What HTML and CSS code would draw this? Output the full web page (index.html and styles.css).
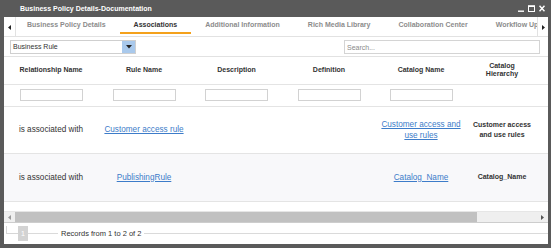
FILE: index.html
```html
<!DOCTYPE html>
<html lang="en">
<head>
<meta charset="UTF-8" />
<title>Business Policy Details-Documentation</title>
<link rel="stylesheet" href="styles.css">
</head>
<body>

<div class="window">
  <div class="titlebar">
    <span class="title">Business Policy Details-Documentation</span>
    <div class="win-controls">
      <svg width="6" height="7" viewBox="0 0 6 7"><path d="M0 6.2H6" stroke="#fff" stroke-width="1.4"/></svg>
      <svg width="7" height="7" viewBox="0 0 7 7"><rect x="0.5" y="1" width="6" height="5.5" fill="none" stroke="#fff" stroke-width="1"/><path d="M0 1.2H7" stroke="#fff" stroke-width="1.6"/></svg>
      <svg width="6" height="7" viewBox="0 0 6 7"><path d="M0.5 0.8L5.5 6.2M5.5 0.8L0.5 6.2" stroke="#fff" stroke-width="1.5"/></svg>
    </div>
  </div>

  <div class="panel">
    <!-- Tabs -->
    <div class="tabbar">
      <div class="tab-arrow tab-arrow-left">
        <svg width="3" height="5" viewBox="0 0 3 5"><path d="M3 0V5L0 2.5Z" fill="#222"/></svg>
      </div>
      <div class="tabs">
        <div class="tab">Business Policy Details</div>
        <div class="tab active">Associations</div>
        <div class="tab">Additional Information</div>
        <div class="tab">Rich Media Library</div>
        <div class="tab">Collaboration Center</div>
        <div class="tab">Workflow Updates</div>
      </div>
      <div class="tab-arrow tab-arrow-right">
        <svg width="3" height="5" viewBox="0 0 3 5"><path d="M0 0V5L3 2.5Z" fill="#222"/></svg>
      </div>
    </div>

    <!-- Type picker and search -->
    <div class="toolbar">
      <div class="select">
        <span class="select-value">Business Rule</span>
        <span class="select-btn">
          <svg width="6" height="4" viewBox="0 0 6 4"><path d="M0 0H6L3 3.5Z" fill="#222"/></svg>
        </span>
      </div>
      <input class="search" type="text" placeholder="Search..." />
    </div>

    <!-- Associations grid -->
    <div class="grid">
      <table>
        <colgroup>
          <col style="width:94px">
          <col style="width:92px">
          <col style="width:93px">
          <col style="width:92px">
          <col style="width:92px">
          <col style="width:70px">
          <col style="width:87px">
        </colgroup>
        <thead>
          <tr class="head-row">
            <th>Relationship Name</th>
            <th>Rule Name</th>
            <th>Description</th>
            <th>Definition</th>
            <th>Catalog Name</th>
            <th>Catalog<br>Hierarchy</th>
            <th></th>
          </tr>
          <tr class="filter-row">
            <td><input class="filter" type="text" /></td>
            <td><input class="filter" type="text" /></td>
            <td><input class="filter" type="text" /></td>
            <td><input class="filter" type="text" /></td>
            <td><input class="filter" type="text" /></td>
            <td></td>
            <td></td>
          </tr>
        </thead>
        <tbody>
          <tr class="data-row">
            <td>is associated with</td>
            <td><a href="#">Customer access rule</a></td>
            <td></td>
            <td></td>
            <td><a href="#">Customer access and use rules</a></td>
            <td class="hier">Customer access and use rules</td>
            <td></td>
          </tr>
          <tr class="data-row alt">
            <td>is associated with</td>
            <td><a href="#">PublishingRule</a></td>
            <td></td>
            <td></td>
            <td><a href="#">Catalog_Name</a></td>
            <td class="hier">Catalog_Name</td>
            <td></td>
          </tr>
        </tbody>
      </table>
    </div>

    <!-- Horizontal scroll -->
    <div class="hscroll">
      <div class="scroll-arrow">
        <svg width="3" height="5" viewBox="0 0 3 5"><path d="M3 0V5L0 2.5Z" fill="#9a9a9a"/></svg>
      </div>
      <div class="scroll-track"><div class="scroll-thumb"></div></div>
      <div class="scroll-arrow">
        <svg width="3" height="5" viewBox="0 0 3 5"><path d="M0 0V5L3 2.5Z" fill="#555"/></svg>
      </div>
    </div>

    <!-- Pager -->
    <div class="pager">
      <span class="pager-corner"></span>
      <span class="page-box">1</span>
      <span class="pager-rule short"></span>
      <span class="records">Records from 1 to 2 of 2</span>
      <span class="pager-rule"></span>
    </div>
  </div>
</div>

</body>
</html>
```

FILE: styles.css
```css
* {
  box-sizing: border-box;
}
body {
  margin: 0;
  font-family: "Liberation Sans", Arial, sans-serif;
  color: #333;
}
.window {
  width: 551px;
  height: 248px;
  background: #5a5a5a;
  display: flex;
  flex-direction: column;
}
.titlebar {
  height: 17px;
  flex-shrink: 0;
  display: flex;
  align-items: center;
  justify-content: space-between;
  padding: 0 6px 0 20px;
  color: #fff;
}
.title {
  font-size: 7px;
  font-weight: bold;
}
.win-controls {
  display: flex;
  align-items: center;
  gap: 4px;
}
.panel {
  flex: 1;
  min-height: 0;
  margin: 0 3px 4px 4px;
  background: #fff;
  display: flex;
  flex-direction: column;
  overflow: hidden;
}

/* tabs */
.tabbar {
  height: 20px;
  flex-shrink: 0;
  display: flex;
  border-bottom: 1px solid #e2e2e2;
}
.tab-arrow {
  width: 12px;
  display: flex;
  align-items: center;
  justify-content: center;
  padding-top: 2px;
}
.tab-arrow-left {
  border-right: 1px solid #e2e2e2;
}
.tab-arrow-right {
  width: 11px;
  border-left: 1px solid #e2e2e2;
}
.tabs {
  flex: 1;
  display: flex;
  overflow: hidden;
  white-space: nowrap;
}
.tab {
  flex-shrink: 0;
  height: 17px;
  padding: 0 14px;
  display: flex;
  align-items: center;
  border-bottom: 2px solid transparent;
  font-size: 7px;
  font-weight: bold;
  color: #8c8c8c;
}
.tab:first-child {
  padding-left: 11px;
}
.tab.active {
  color: #333;
  border-bottom-color: #f4a11c;
}

/* toolbar */
.toolbar {
  height: 20px;
  flex-shrink: 0;
  display: flex;
  justify-content: space-between;
  align-items: flex-start;
  padding: 3px 8px 0 6px;
  border-bottom: 1px solid #e2e2e2;
}
.select {
  width: 126px;
  height: 14px;
  display: flex;
  border: 1px solid #cfcfcf;
}
.select-value {
  flex: 1;
  font-size: 7px;
  line-height: 12px;
  padding-left: 2px;
  color: #333;
}
.select-btn {
  width: 13px;
  background: #a9c9ec;
  display: flex;
  align-items: center;
  justify-content: center;
}
.search {
  width: 196px;
  height: 14px;
  margin: 0;
  padding: 0 2px;
  border: 1px solid #d4d4d4;
  font-family: inherit;
  font-size: 7px;
  outline: none;
}
.search::placeholder {
  color: #8a8a8a;
}

/* grid */
.grid {
  flex: 1;
  min-height: 0;
  overflow: hidden;
}
table {
  width: 620px;
  table-layout: fixed;
  border-collapse: collapse;
}
th, td {
  padding: 0 4px;
  text-align: center;
  vertical-align: middle;
  border-bottom: 1px solid #e4e4e4;
}
th {
  font-size: 7px;
  font-weight: bold;
  line-height: 1.2;
  color: #333;
}
.head-row {
  height: 27px;
}
.filter-row {
  height: 22px;
}
.filter {
  display: block;
  width: 63px;
  height: 12px;
  margin: 0 auto;
  border: 1px solid #d2d2d2;
  padding: 0;
}
.data-row {
  height: 47px;
}
.data-row.alt {
  height: 48px;
  background: #f8f8fa;
}
.data-row td {
  font-size: 8.2px;
  line-height: 11px;
  color: #333;
}
.data-row td.hier {
  font-size: 7px;
  font-weight: bold;
  line-height: 10px;
  padding: 0 5px;
}
.data-row a {
  color: #3d7cc9;
  text-decoration: underline;
}

/* horizontal scroll */
.hscroll {
  height: 12px;
  flex-shrink: 0;
  display: flex;
  background: #efefef;
  border-top: 1px solid #e6e6e6;
  border-bottom: 1px solid #cdcdcd;
}
.scroll-arrow {
  width: 11px;
  display: flex;
  align-items: center;
  justify-content: center;
}
.scroll-track {
  flex: 1;
  display: flex;
}
.scroll-thumb {
  width: 462px;
  background: #c1c1c1;
}

/* pager */
.pager {
  height: 21px;
  flex-shrink: 0;
  display: flex;
  align-items: center;
  padding-left: 2px;
}
.pager-corner {
  align-self: flex-start;
  margin-top: 3px;
  width: 12px;
  height: 8px;
  border-left: 1px solid #d6d6d6;
  border-bottom: 1px solid #d6d6d6;
}
.page-box {
  width: 10px;
  height: 15px;
  background: #d3d3d3;
  color: #fff;
  font-size: 7px;
  display: flex;
  align-items: center;
  justify-content: center;
}
.pager-rule {
  flex: 1;
  height: 1px;
  background: #dadada;
  margin-left: 3px;
}
.pager-rule.short {
  flex: 0 0 30px;
  margin: 0 3px 0 0;
}
.records {
  font-size: 7.5px;
  color: #333;
}
```
